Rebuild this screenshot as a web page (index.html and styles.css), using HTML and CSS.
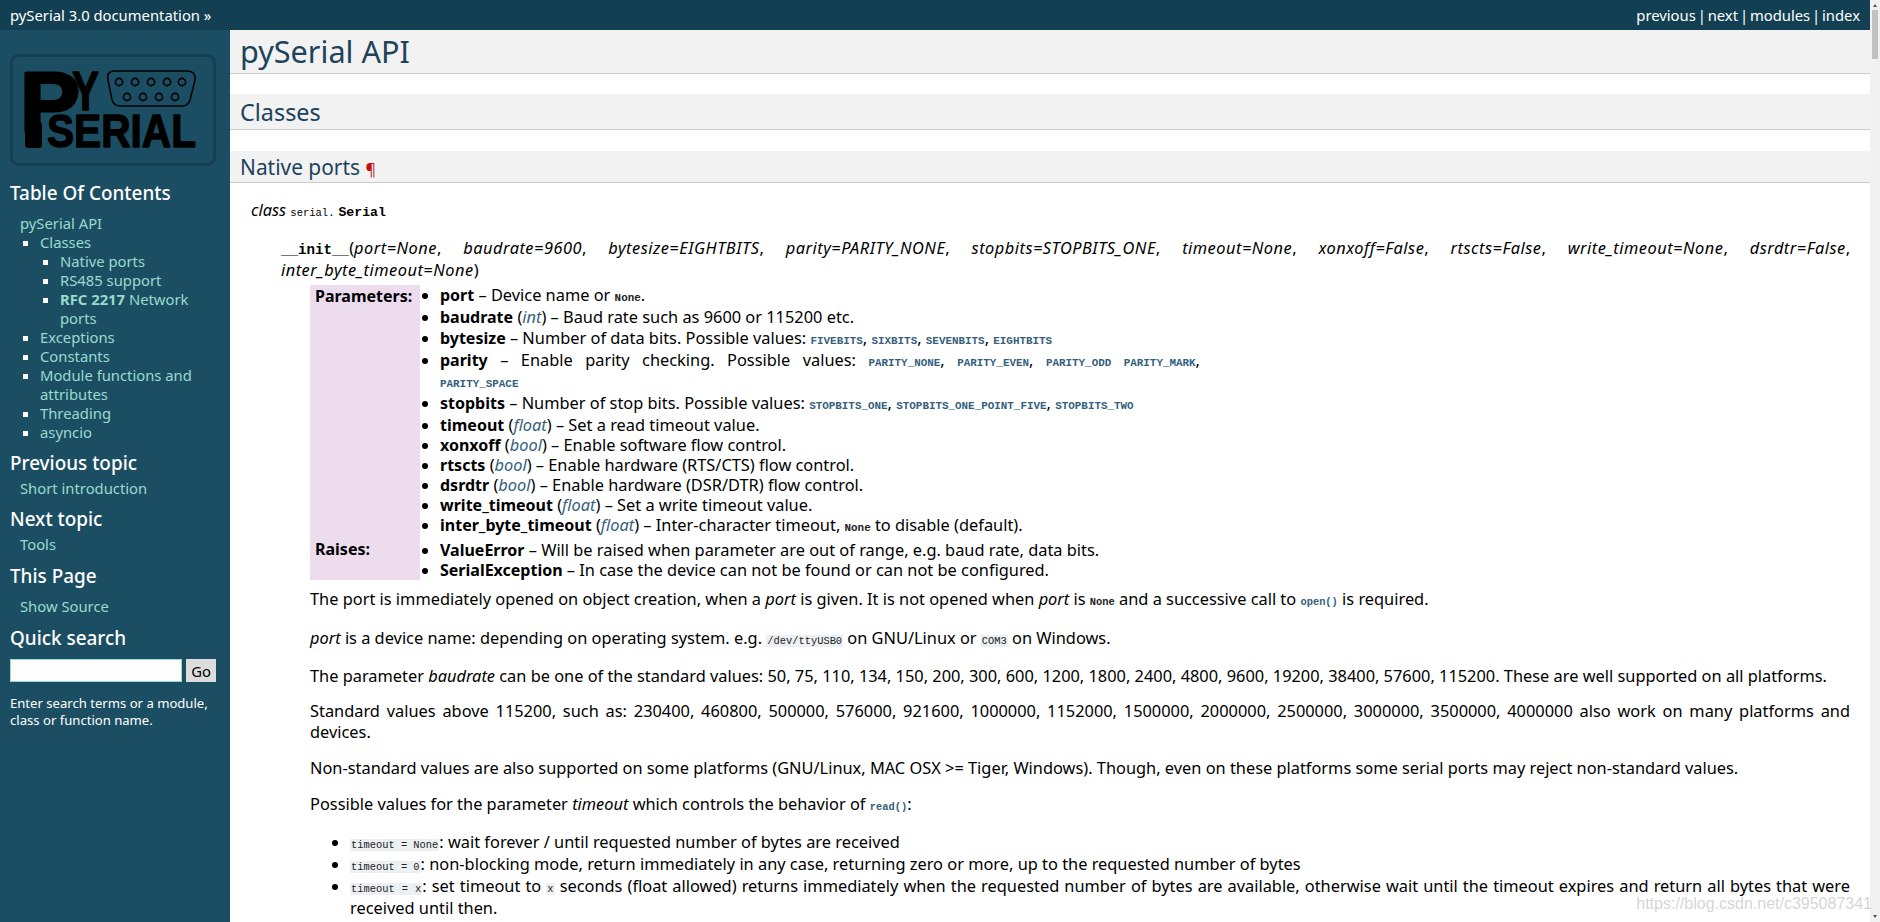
FILE: index.html
```html
<!DOCTYPE html>
<html lang="en">
<head>
<meta charset="utf-8">
<title>pySerial API</title>
<link rel="stylesheet" href="styles.css">
</head>
<body>
<div class="page">
  <header class="topbar">
    <div><a href="#">pySerial 3.0 documentation</a> <span class="raquo">»</span></div>
    <nav class="topnav"><a href="#">previous</a> | <a href="#">next</a> | <a href="#">modules</a> | <a href="#">index</a></nav>
  </header>
  <div class="layout">
    <aside class="sidebar">
      <svg class="logo" viewBox="0 0 206 112" width="206" height="112">
        <rect x="1.5" y="1.5" width="203" height="109" rx="7" fill="none" stroke="#153f52" stroke-width="3"/>
        <rect x="15" y="68" width="17" height="26" rx="3" fill="#000"/>
        <g class="logo-letters">
          <text class="logo-p" x="10" y="78" font-size="85" textLength="60" lengthAdjust="spacingAndGlyphs">P</text>
          <text x="62" y="56" font-size="56" textLength="27" lengthAdjust="spacingAndGlyphs">Y</text>
          <text x="37" y="93" font-size="46" textLength="149" lengthAdjust="spacingAndGlyphs">SERIAL</text>
        </g>
        <path d="M105 17H177Q186 17 185 26L180 46Q178 52 172 52H110Q104 52 102 46L98 26Q96 17 105 17Z" fill="none" stroke="#000" stroke-width="1.5"/>
        <g fill="none" stroke="#000" stroke-width="1.6">
          <circle cx="109" cy="28" r="3.6"/><circle cx="125" cy="28" r="3.6"/><circle cx="141" cy="28" r="3.6"/><circle cx="157" cy="28" r="3.6"/><circle cx="172" cy="28" r="3.6"/>
          <circle cx="117" cy="43" r="3.6"/><circle cx="133" cy="43" r="3.6"/><circle cx="149" cy="43" r="3.6"/><circle cx="165" cy="43" r="3.6"/>
        </g>
      </svg>
      <h3 class="toc-title">Table Of Contents</h3>
      <ul class="toc">
        <li><a href="#">pySerial API</a>
          <ul>
            <li><a href="#">Classes</a>
              <ul>
                <li><a href="#">Native ports</a></li>
                <li><a href="#">RS485 support</a></li>
                <li><a href="#"><strong>RFC 2217</strong> Network ports</a></li>
              </ul>
            </li>
            <li><a href="#">Exceptions</a></li>
            <li><a href="#">Constants</a></li>
            <li><a href="#">Module functions and attributes</a></li>
            <li><a href="#">Threading</a></li>
            <li><a href="#">asyncio</a></li>
          </ul>
        </li>
      </ul>
      <h4 class="side-h first-h">Previous topic</h4>
      <p class="side-link"><a href="#">Short introduction</a></p>
      <h4 class="side-h">Next topic</h4>
      <p class="side-link"><a href="#">Tools</a></p>
      <h3 class="side-h page-h">This Page</h3>
      <p class="side-link source"><a href="#">Show Source</a></p>
      <h3 class="side-h search-h">Quick search</h3>
      <form class="search">
        <input class="search-input" type="text">
        <button class="search-go" type="button">Go</button>
      </form>
      <p class="search-note">Enter search terms or a module, class or function name.</p>
    </aside>
    <main class="content">
      <h1>pySerial API</h1>
      <h2>Classes</h2>
      <h3 class="sec">Native ports <span class="pilcrow">¶</span></h3>
      <div class="sig-class"><em class="kw">class</em> <code class="prename">serial.</code><code class="name">Serial</code></div>
      <div class="members">
        <div class="sig-init"><code class="name init">__init__</code>(<em>port=None</em>, <em>baudrate=9600</em>, <em>bytesize=EIGHTBITS</em>, <em>parity=PARITY_NONE</em>, <em>stopbits=STOPBITS_ONE</em>, <em>timeout=None</em>, <em>xonxoff=False</em>, <em>rtscts=False</em>, <em>write_timeout=None</em>, <em>dsrdtr=False</em>, <span class="sig-last"><em>inter_byte_timeout=None</em>)</span></div>
        <div class="desc">
          <table class="fields">
            <tr class="row-params">
              <th>Parameters:</th>
              <td>
                <ul>
                  <li class="code-line"><strong>port</strong> – Device name or <code class="lit">None</code>.</li>
                  <li class="code-line"><strong>baudrate</strong> (<a class="type" href="#">int</a>) – Baud rate such as 9600 or 115200 etc.</li>
                  <li class="code-line"><strong>bytesize</strong> – Number of data bits. Possible values: <code class="xref">FIVEBITS</code>, <code class="xref">SIXBITS</code>, <code class="xref">SEVENBITS</code>, <code class="xref">EIGHTBITS</code></li>
                  <li class="code-line parity"><strong>parity</strong> – Enable parity checking. Possible values: <code class="xref">PARITY_NONE</code>, <code class="xref">PARITY_EVEN</code>, <code class="xref">PARITY_ODD</code> <code class="xref">PARITY_MARK</code>, <code class="xref">PARITY_SPACE</code></li>
                  <li class="code-line"><strong>stopbits</strong> – Number of stop bits. Possible values: <code class="xref">STOPBITS_ONE</code>, <code class="xref">STOPBITS_ONE_POINT_FIVE</code>, <code class="xref">STOPBITS_TWO</code></li>
                  <li><strong>timeout</strong> (<a class="type" href="#">float</a>) – Set a read timeout value.</li>
                  <li><strong>xonxoff</strong> (<a class="type" href="#">bool</a>) – Enable software flow control.</li>
                  <li><strong>rtscts</strong> (<a class="type" href="#">bool</a>) – Enable hardware (RTS/CTS) flow control.</li>
                  <li><strong>dsrdtr</strong> (<a class="type" href="#">bool</a>) – Enable hardware (DSR/DTR) flow control.</li>
                  <li><strong>write_timeout</strong> (<a class="type" href="#">float</a>) – Set a write timeout value.</li>
                  <li><strong>inter_byte_timeout</strong> (<a class="type" href="#">float</a>) – Inter-character timeout, <code class="lit">None</code> to disable (default).</li>
                </ul>
              </td>
            </tr>
            <tr class="row-raises">
              <th>Raises:</th>
              <td>
                <ul>
                  <li><strong>ValueError</strong> – Will be raised when parameter are out of range, e.g. baud rate, data bits.</li>
                  <li><strong>SerialException</strong> – In case the device can not be found or can not be configured.</li>
                </ul>
              </td>
            </tr>
          </table>
          <p class="tall">The port is immediately opened on object creation, when a <em>port</em> is given. It is not opened when <em>port</em> is <code class="lit">None</code> and a successive call to <code class="xref">open()</code> is required.</p>
          <p class="tall"><em>port</em> is a device name: depending on operating system. e.g. <code class="plain">/dev/ttyUSB0</code> on GNU/Linux or <code class="plain">COM3</code> on Windows.</p>
          <p class="tall-after">The parameter <em>baudrate</em> can be one of the standard values: 50, 75, 110, 134, 150, 200, 300, 600, 1200, 1800, 2400, 4800, 9600, 19200, 38400, 57600, 115200. These are well supported on all platforms.</p>
          <p>Standard values above 115200, such as: 230400, 460800, 500000, 576000, 921600, 1000000, 1152000, 1500000, 2000000, 2500000, 3000000, 3500000, 4000000 also work on many platforms and devices.</p>
          <p>Non-standard values are also supported on some platforms (GNU/Linux, MAC OSX &gt;= Tiger, Windows). Though, even on these platforms some serial ports may reject non-standard values.</p>
          <p>Possible values for the parameter <em>timeout</em> which controls the behavior of <code class="xref">read()</code>:</p>
          <ul class="values">
            <li><code class="plain">timeout = None</code>: wait forever / until requested number of bytes are received</li>
            <li><code class="plain">timeout = 0</code>: non-blocking mode, return immediately in any case, returning zero or more, up to the requested number of bytes</li>
            <li><code class="plain">timeout = x</code>: set timeout to <code class="plain">x</code> seconds (float allowed) returns immediately when the requested number of bytes are available, otherwise wait until the timeout expires and return all bytes that were received until then.</li>
          </ul>
        </div>
      </div>
    </main>
  </div>
</div>
<div class="scrollbar">
  <span class="arrow-up"></span>
  <span class="thumb"></span>
  <span class="arrow-down"></span>
</div>
<div class="watermark">https://blog.csdn.net/c395087341</div>
</body>
</html>
```
FILE: styles.css
```css
html, body { margin: 0; padding: 0; height: 100%; overflow: hidden; }
body { display: flex; font-family: "Noto Sans", sans-serif; font-size: 16.36px; color: #000; background: #fff; position: relative; }
.page { flex: 1; min-width: 0; display: flex; flex-direction: column; height: 922px; overflow: hidden; }
.topbar { flex: none; height: 30px; background: #133f52; color: #fff; display: flex; justify-content: space-between; align-items: center; padding: 0 10px; font-size: 14.8px; }
.topbar a { color: #fff; text-decoration: none; }
.topnav { word-spacing: -2px; }
.layout { flex: 1; display: flex; min-height: 0; }
.sidebar { flex: none; width: 210px; padding: 24px 10px 0; background: #1c4e63; color: #fff; font-size: 14.8px; line-height: 19px; }
.sidebar a { color: #98dbcc; text-decoration: none; }
.logo { display: block; }
.logo-letters text { font-family: "Liberation Sans", sans-serif; font-weight: 700; fill: #000; stroke: #000; stroke-width: 1.4; stroke-linejoin: round; }
.logo-letters .logo-p { stroke-width: 3; }
.toc-title, .side-h { margin: 0; font-size: 18.9px; font-weight: 500; line-height: 26px; color: #fff; }
.toc-title { margin-top: 14px; }
.toc, .toc ul { margin: 0; list-style: square; }
.toc { list-style: none; padding: 0 0 0 10px; margin-top: 8px; }
.toc ul { padding: 0 0 0 20px; }
.toc li::marker { color: #fff; }
.side-h { margin-top: 8px; }
.side-link { margin: 3px 0 0 10px; }
.page-h { margin-top: 9px; }
.source { margin-top: 8px; }
.search-h { margin-top: 9px; }
.search { display: flex; gap: 4px; margin-top: 8px; }
.search-input { box-sizing: border-box; width: 172px; height: 23px; padding: 0; border: 1px solid #98dbcc; background: #fff; }
.search-go { box-sizing: border-box; width: 30px; height: 23px; padding: 0; border: none; background: #ddd; color: #000; font: 14.8px "Noto Sans", sans-serif; }
.search-note { margin: 13px 0 0; font-size: 13.1px; line-height: 17px; }
.content { flex: 1; min-width: 0; }
h1, h2, .sec { margin: 0; padding-left: 10px; background: #f2f2f2; border-bottom: 1px solid #ccc; color: #20435c; font-weight: 400; }
h1 { font-size: 30.6px; line-height: 43px; height: 43px; }
h2 { font-size: 23.4px; line-height: 36px; height: 35px; margin-top: 20px; }
.sec { font-size: 20.9px; line-height: 33px; height: 31px; margin-top: 21px; }
.pilcrow { color: #c60f0f; font-size: 16px; }
code { font-family: "Liberation Mono", monospace; font-size: 10.9px; line-height: 1; }
.sig-class { margin: 17px 20px 0 21px; line-height: 21px; }
.prename { font-size: 10.5px; margin-right: 4px; }
.name { font-size: 13.2px; font-weight: 700; }
.init { font-size: 14.2px; }
.members { margin: 16px 20px 0 51px; }
.sig-init { text-align: justify; line-height: 22px; }
.sig-init em { letter-spacing: 0.5px; }
.sig-last { display: inline-block; width: 100%; }
.desc { margin-left: 29px; }
.fields { border-collapse: collapse; border-spacing: 0; margin-top: 4px; }
.fields th { width: 100px; padding: 1px 5px 0; background: #ecdcee; text-align: left; vertical-align: top; font-size: 16px; font-weight: 700; white-space: nowrap; line-height: 21px; }
.fields td { padding: 0; vertical-align: top; }
.row-params td { padding-bottom: 3px; }
.row-raises td { padding-top: 2px; }
.fields strong { font-size: 16px; }
.fields ul { margin: 0; padding: 0 0 0 20px; width: 760px; }
.fields li { line-height: 20px; }
.fields .code-line { line-height: 21.6px; }
.parity { text-align: justify; }
.lit { font-weight: 700; color: #222; }
.xref { font-weight: 700; color: #355f7c; }
.plain { background: #ecf0f3; padding: 0 1px; color: #222; }
.desc p code, .values code { font-size: 10.4px; }
.type { color: #355f7c; font-style: italic; text-decoration: none; }
.desc p { margin: 15px 0 0; line-height: 20.8px; text-align: justify; }
.desc .fields + p { margin-top: 8px; }
.desc .tall { line-height: 23px; }
.desc .tall + .tall, .desc .tall-after { margin-top: 16px; }
.values { margin: 16px 0 0; padding: 0 0 0 40px; text-align: justify; }
.values li { line-height: 22px; }
.scrollbar { flex: none; width: 10px; height: 922px; background: #f1f1f1; display: flex; flex-direction: column; align-items: center; }
.arrow-up, .arrow-down { flex: none; width: 0; height: 0; border-left: 2px solid transparent; border-right: 2px solid transparent; }
.arrow-up { margin-top: 4px; border-bottom: 3px solid #505050; }
.arrow-down { margin-top: auto; margin-bottom: 4px; border-top: 3px solid #505050; }
.thumb { flex: none; width: 6px; height: 49px; margin-top: 3px; background: #c1c1c1; }
.watermark { position: absolute; right: 8px; bottom: 9px; font: 16px "Liberation Sans", sans-serif; color: rgba(170,170,170,0.5); white-space: nowrap; }
```
